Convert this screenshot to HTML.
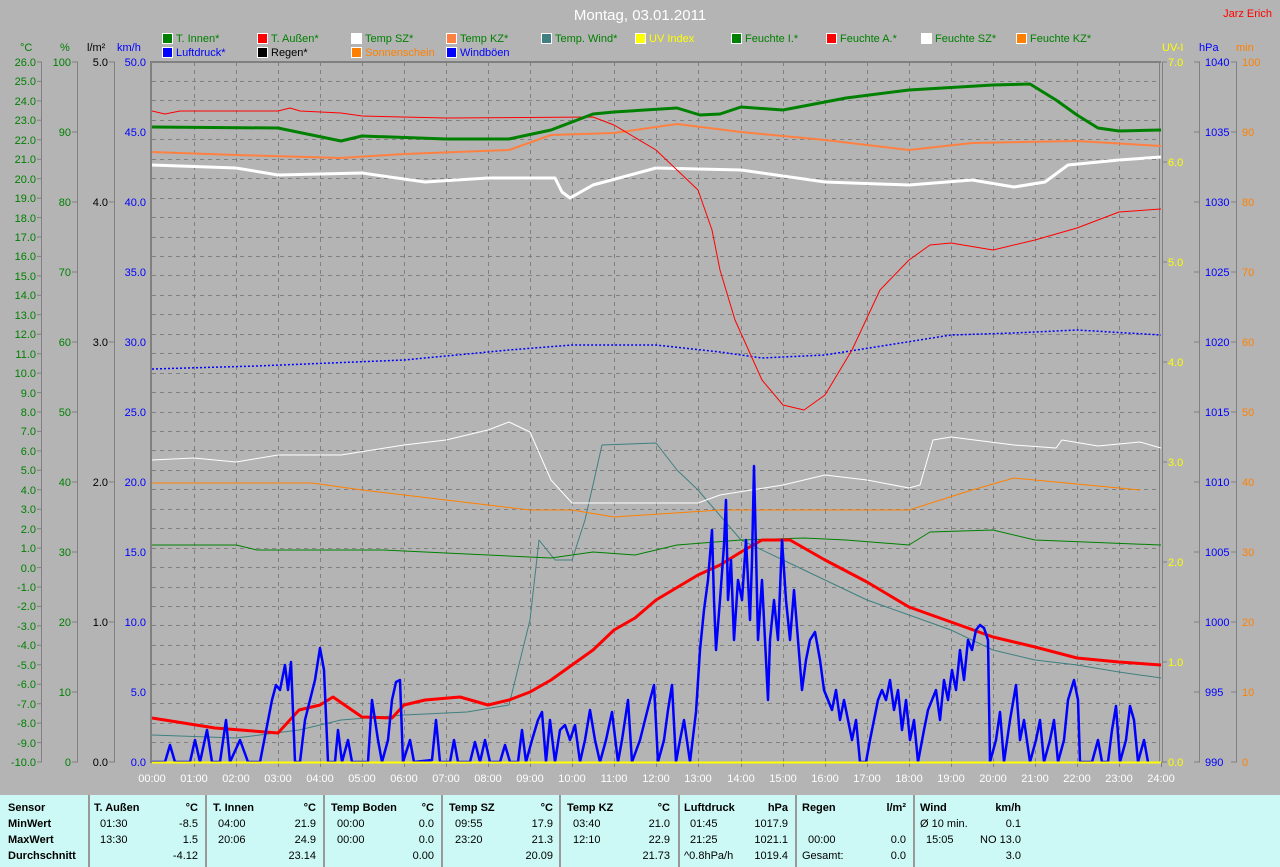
<!DOCTYPE html>
<html><head><meta charset="utf-8"><style>
body{margin:0;width:1280px;height:867px;background:#b4b4b4;overflow:hidden;font-family:"Liberation Sans",sans-serif;position:relative}
svg{position:absolute;left:0;top:0}
#tb{position:absolute;left:0;top:795px;width:1280px;height:72px;background:#ccf9f5;font-size:11px;color:#000}
#tb div{position:absolute;white-space:nowrap}
.b{font-weight:bold}
.sep{width:2px;height:72px;top:0;background:#999}
</style></head><body>
<svg width="1280" height="795" font-family="Liberation Sans, sans-serif" font-size="11">
<text x="640" y="20" fill="#fff" font-size="15" text-anchor="middle">Montag, 03.01.2011</text>
<text x="1272" y="17" fill="#f00" font-size="11" text-anchor="end">Jarz Erich</text>
<g stroke="#fff" stroke-width="1">
<rect x="162.5" y="33.5" width="10" height="10" fill="#008000"/><rect x="257.5" y="33.5" width="10" height="10" fill="#f00"/><rect x="351.5" y="33.5" width="10" height="10" fill="#fff"/><rect x="446.5" y="33.5" width="10" height="10" fill="#ff8040"/><rect x="541.5" y="33.5" width="10" height="10" fill="#408080"/><rect x="635.5" y="33.5" width="10" height="10" fill="#ff0"/><rect x="731.5" y="33.5" width="10" height="10" fill="#008000"/><rect x="826.5" y="33.5" width="10" height="10" fill="#f00"/><rect x="921.5" y="33.5" width="10" height="10" fill="#fff"/><rect x="1016.5" y="33.5" width="10" height="10" fill="#ff8000"/>
<rect x="162.5" y="47.5" width="10" height="10" fill="#00f"/><rect x="257.5" y="47.5" width="10" height="10" fill="#000"/><rect x="351.5" y="47.5" width="10" height="10" fill="#ff8000"/><rect x="446.5" y="47.5" width="10" height="10" fill="#00f"/>
</g>
<g fill="#008000"><text x="176" y="42">T. Innen*</text><text x="271" y="42">T. Außen*</text><text x="365" y="42">Temp SZ*</text><text x="460" y="42">Temp KZ*</text><text x="555" y="42">Temp. Wind*</text><text x="745" y="42">Feuchte I.*</text><text x="840" y="42">Feuchte A.*</text><text x="935" y="42">Feuchte SZ*</text><text x="1030" y="42">Feuchte KZ*</text></g>
<text x="649" y="42" fill="#ff0">UV Index</text>
<text x="176" y="56" fill="#00f">Luftdruck*</text><text x="271" y="56" fill="#000">Regen*</text><text x="365" y="56" fill="#ff8000">Sonnenschein</text><text x="460" y="56" fill="#00f">Windböen</text>
<text x="20" y="51" fill="#008000">°C</text><text x="60" y="51" fill="#008000">%</text><text x="87" y="51" fill="#000">l/m²</text><text x="117" y="51" fill="#00f">km/h</text>
<text x="1162" y="51" fill="#ff0">UV-I</text><text x="1199" y="51" fill="#00f">hPa</text><text x="1236" y="51" fill="#ff8000">min</text>
<!-- grid -->
<g stroke="#808080" stroke-dasharray="4,4" stroke-width="1">
<path d="M152 81.5H1159M152 100.5H1159M152 120.5H1159M152 139.5H1159M152 159.5H1159M152 178.5H1159M152 198.5H1159M152 217.5H1159M152 237.5H1159M152 256.5H1159M152 275.5H1159M152 295.5H1159M152 314.5H1159M152 334.5H1159M152 353.5H1159M152 373.5H1159M152 392.5H1159M152 412.5H1159M152 431.5H1159M152 450.5H1159M152 470.5H1159M152 489.5H1159M152 509.5H1159M152 528.5H1159M152 548.5H1159M152 567.5H1159M152 587.5H1159M152 606.5H1159M152 625.5H1159M152 645.5H1159M152 664.5H1159M152 684.5H1159M152 703.5H1159M152 723.5H1159M152 742.5H1159"/>
<path d="M194.5 62V762M236.5 62V762M278.5 62V762M320.5 62V762M362.5 62V762M404.5 62V762M446.5 62V762M488.5 62V762M530.5 62V762M572.5 62V762M614.5 62V762M656.5 62V762M698.5 62V762M741.5 62V762M783.5 62V762M825.5 62V762M867.5 62V762M909.5 62V762M951.5 62V762M993.5 62V762M1035.5 62V762M1077.5 62V762M1119.5 62V762"/>
</g>
<g stroke="#808080" stroke-width="1">
<path d="M194.5 762v5M236.5 762v5M278.5 762v5M320.5 762v5M362.5 762v5M404.5 762v5M446.5 762v5M488.5 762v5M530.5 762v5M572.5 762v5M614.5 762v5M656.5 762v5M698.5 762v5M741.5 762v5M783.5 762v5M825.5 762v5M867.5 762v5M909.5 762v5M951.5 762v5M993.5 762v5M1035.5 762v5M1077.5 762v5M1119.5 762v5M1161.5 762v5"/>
<path d="M41.5 62V762M77.5 62V762M114.5 62V762M1199.5 62V762M1236.5 62V762"/>
<path d="M37 62h5M37 81.4h5M37 100.9h5M37 120.3h5M37 139.8h5M37 159.2h5M37 178.7h5M37 198.1h5M37 217.6h5M37 237h5M37 256.4h5M37 275.9h5M37 295.3h5M37 314.8h5M37 334.2h5M37 353.7h5M37 373.1h5M37 392.6h5M37 412h5M37 431.4h5M37 450.9h5M37 470.3h5M37 489.8h5M37 509.2h5M37 528.7h5M37 548.1h5M37 567.6h5M37 587h5M37 606.4h5M37 625.9h5M37 645.3h5M37 664.8h5M37 684.2h5M37 703.7h5M37 723.1h5M37 742.6h5M37 762h5"/>
<path d="M72 62h6M72 132h6M72 202h6M72 272h6M72 342h6M72 412h6M72 482h6M72 552h6M72 622h6M72 692h6M72 762h6"/>
<path d="M109 62h6M109 202h6M109 342h6M109 482h6M109 622h6M109 762h6"/>
<path d="M1162 62h5M1162 162h5M1162 262h5M1162 362h5M1162 462h5M1162 562h5M1162 662h5M1162 762h5"/>
<path d="M1194 62h6M1194 132h6M1194 202h6M1194 272h6M1194 342h6M1194 412h6M1194 482h6M1194 552h6M1194 622h6M1194 692h6M1194 762h6M1231 62h6M1231 132h6M1231 202h6M1231 272h6M1231 342h6M1231 412h6M1231 482h6M1231 552h6M1231 622h6M1231 692h6M1231 762h6"/>
</g>
<path d="M151 62H1161M151 61V763" stroke="#808080" stroke-width="2" fill="none"/>
<path d="M1159.5 62V762M1162.5 62V762" stroke="#808080" stroke-width="1"/>
<g fill="#008000" text-anchor="end">
<text x="36" y="66">26.0</text><text x="36" y="85">25.0</text><text x="36" y="105">24.0</text><text x="36" y="124">23.0</text><text x="36" y="144">22.0</text><text x="36" y="163">21.0</text><text x="36" y="183">20.0</text><text x="36" y="202">19.0</text><text x="36" y="222">18.0</text><text x="36" y="241">17.0</text><text x="36" y="260">16.0</text><text x="36" y="280">15.0</text><text x="36" y="299">14.0</text><text x="36" y="319">13.0</text><text x="36" y="338">12.0</text><text x="36" y="358">11.0</text><text x="36" y="377">10.0</text><text x="36" y="397">9.0</text><text x="36" y="416">8.0</text><text x="36" y="435">7.0</text><text x="36" y="455">6.0</text><text x="36" y="474">5.0</text><text x="36" y="494">4.0</text><text x="36" y="513">3.0</text><text x="36" y="533">2.0</text><text x="36" y="552">1.0</text><text x="36" y="572">0.0</text><text x="36" y="591">-1.0</text><text x="36" y="610">-2.0</text><text x="36" y="630">-3.0</text><text x="36" y="649">-4.0</text><text x="36" y="669">-5.0</text><text x="36" y="688">-6.0</text><text x="36" y="708">-7.0</text><text x="36" y="727">-8.0</text><text x="36" y="747">-9.0</text><text x="36" y="766">-10.0</text>
<text x="71" y="66">100</text><text x="71" y="136">90</text><text x="71" y="206">80</text><text x="71" y="276">70</text><text x="71" y="346">60</text><text x="71" y="416">50</text><text x="71" y="486">40</text><text x="71" y="556">30</text><text x="71" y="626">20</text><text x="71" y="696">10</text><text x="71" y="766">0</text>
</g>
<g fill="#000" text-anchor="end"><text x="108" y="66">5.0</text><text x="108" y="206">4.0</text><text x="108" y="346">3.0</text><text x="108" y="486">2.0</text><text x="108" y="626">1.0</text><text x="108" y="766">0.0</text></g>
<g fill="#00f" text-anchor="end"><text x="146" y="66">50.0</text><text x="146" y="136">45.0</text><text x="146" y="206">40.0</text><text x="146" y="276">35.0</text><text x="146" y="346">30.0</text><text x="146" y="416">25.0</text><text x="146" y="486">20.0</text><text x="146" y="556">15.0</text><text x="146" y="626">10.0</text><text x="146" y="696">5.0</text><text x="146" y="766">0.0</text></g>
<g fill="#ff0"><text x="1168" y="66">7.0</text><text x="1168" y="166">6.0</text><text x="1168" y="266">5.0</text><text x="1168" y="366">4.0</text><text x="1168" y="466">3.0</text><text x="1168" y="566">2.0</text><text x="1168" y="666">1.0</text><text x="1168" y="766">0.0</text></g>
<g fill="#00f"><text x="1205" y="66">1040</text><text x="1205" y="136">1035</text><text x="1205" y="206">1030</text><text x="1205" y="276">1025</text><text x="1205" y="346">1020</text><text x="1205" y="416">1015</text><text x="1205" y="486">1010</text><text x="1205" y="556">1005</text><text x="1205" y="626">1000</text><text x="1205" y="696">995</text><text x="1205" y="766">990</text></g>
<g fill="#ff8000"><text x="1242" y="66">100</text><text x="1242" y="136">90</text><text x="1242" y="206">80</text><text x="1242" y="276">70</text><text x="1242" y="346">60</text><text x="1242" y="416">50</text><text x="1242" y="486">40</text><text x="1242" y="556">30</text><text x="1242" y="626">20</text><text x="1242" y="696">10</text><text x="1242" y="766">0</text></g>
<g fill="#fff" text-anchor="middle"><text x="152" y="782">00:00</text><text x="194" y="782">01:00</text><text x="236" y="782">02:00</text><text x="278" y="782">03:00</text><text x="320" y="782">04:00</text><text x="362" y="782">05:00</text><text x="404" y="782">06:00</text><text x="446" y="782">07:00</text><text x="488" y="782">08:00</text><text x="530" y="782">09:00</text><text x="572" y="782">10:00</text><text x="614" y="782">11:00</text><text x="656" y="782">12:00</text><text x="698" y="782">13:00</text><text x="741" y="782">14:00</text><text x="783" y="782">15:00</text><text x="825" y="782">16:00</text><text x="867" y="782">17:00</text><text x="909" y="782">18:00</text><text x="951" y="782">19:00</text><text x="993" y="782">20:00</text><text x="1035" y="782">21:00</text><text x="1077" y="782">22:00</text><text x="1119" y="782">23:00</text><text x="1161" y="782">24:00</text></g>
<g fill="none" stroke-linejoin="round">
<polyline stroke="#408080" stroke-width="1" points="152,735 236,738 299,730 341,720 404,715 467,712 509,705 530,620 539,540 555,560 572,560 585,520 602,445 656,443 677,470 698,490 741,540 783,560 825,580 867,600 909,615 951,630 993,650 1035,660 1077,665 1119,672 1161,678"/>
<polyline stroke="#008000" stroke-width="1" points="152,545 236,545 257,550 383,550 488,555 551,558 593,552 635,555 677,545 741,540 804,538 846,540 909,545 930,532 993,530 1035,540 1161,545"/>
<polyline stroke="#ff8000" stroke-width="1" points="152,483 312,483 362,490 446,500 530,510 572,510 614,517 720,510 909,510 972,490 1014,478 1077,484 1140,490"/>
<polyline stroke="#fff" stroke-width="1" points="152,460 194,458 236,462 278,455 341,455 404,445 446,440 488,430 509,422 530,432 551,480 572,503 698,503 720,495 783,485 825,475 867,480 909,488 920,485 933,440 951,437 1014,445 1056,448 1062,440 1098,446 1140,442 1161,448"/>
<polyline stroke="#00f" stroke-width="1.5" stroke-dasharray="2,2" points="152,369 257,366 404,360 509,350 572,345 656,345 720,352 762,358 825,355 888,345 951,335 1014,333 1077,330 1161,335"/>
<polyline stroke="#fff" stroke-width="3" points="152,165 236,168 278,175 362,173 425,182 488,178 555,178 562,192 570,198 593,185 656,168 741,170 825,182 909,185 972,180 1014,187 1045,182 1068,165 1119,160 1161,157"/>
<polyline stroke="#ff8040" stroke-width="2" points="152,152 236,155 341,158 404,154 509,150 551,135 614,133 677,124 741,132 825,140 909,150 972,143 1077,141 1161,146"/>
<polyline stroke="#f00" stroke-width="1" points="152,111 165,114 180,111 278,111 290,108 300,111 341,113 362,116 446,118 593,117 614,125 656,150 698,190 712,230 720,270 735,320 762,380 783,405 804,410 825,395 852,350 880,290 909,260 930,245 951,243 993,250 1035,240 1077,228 1119,212 1161,209"/>
<polyline stroke="#008000" stroke-width="3" points="152,127 278,128 341,141 362,136 446,139 509,139 551,130 593,114 614,112 677,108 700,115 720,114 741,107 783,110 846,98 909,90 993,85 1030,84 1056,100 1077,115 1098,128 1119,131 1161,130"/>
<polyline stroke="#f00" stroke-width="3" points="152,718 215,728 278,733 299,710 320,705 333,697 362,717 392,718 404,705 425,700 460,697 488,705 509,700 530,692 551,680 593,650 614,630 635,618 656,600 698,575 720,565 741,552 762,540 790,540 825,560 867,582 909,607 951,622 993,637 1035,647 1077,658 1119,662 1161,665"/>
<polyline stroke="#00f" stroke-width="2.5" points="152,762 165,762 170,745 175,762 190,762 195,740 200,762 207,730 212,762 220,762 226,720 230,762 240,740 248,762 260,762 272,700 276,685 280,690 285,665 288,690 291,662 295,762 300,762 305,720 310,700 315,680 320,648 324,670 328,762 335,762 338,730 342,762 348,740 352,762 368,762 372,700 378,740 382,762 388,740 392,700 396,682 400,680 403,762 410,740 414,762 432,760 436,720 440,762 450,762 454,740 458,762 470,762 475,742 480,762 485,740 490,762 500,762 505,745 510,762 518,762 522,730 526,762 532,740 538,720 542,712 546,762 550,720 555,762 560,730 565,725 570,740 575,725 580,762 585,740 590,710 595,740 600,762 606,740 612,712 618,762 622,740 628,700 632,762 640,740 645,720 650,700 654,685 658,762 664,740 668,710 672,685 676,762 680,740 684,720 690,762 696,712 700,650 704,610 708,580 712,530 714,600 716,650 720,600 724,545 726,500 728,600 731,560 734,640 738,580 742,600 746,540 750,620 752,560 754,466 756,550 758,640 762,580 765,640 768,700 770,640 774,600 778,640 782,540 786,600 790,640 794,590 798,640 802,690 806,660 810,640 815,632 820,660 824,690 828,700 832,710 836,690 840,720 844,700 848,720 852,740 856,720 860,762 866,762 870,740 874,720 878,700 882,690 886,700 890,680 894,710 898,690 902,730 906,700 910,740 914,720 918,762 924,730 928,710 932,700 936,690 940,720 944,680 948,700 952,670 956,690 960,650 964,680 968,640 972,650 976,630 980,625 984,628 988,640 990,762 996,740 1000,712 1004,762 1010,720 1016,685 1020,740 1024,720 1030,762 1036,740 1040,720 1044,762 1050,740 1054,720 1058,762 1064,740 1068,700 1074,680 1078,700 1080,762 1092,762 1098,740 1102,762 1108,762 1112,730 1116,706 1120,762 1126,740 1130,706 1134,720 1138,762 1144,740 1148,762"/>
</g>
<path d="M152 762.5H1161" stroke="#ff0" stroke-width="2"/>
</svg>
<div id="tb">
<div class="sep" style="left:88px"></div><div class="sep" style="left:205px"></div><div class="sep" style="left:323px"></div><div class="sep" style="left:441px"></div><div class="sep" style="left:559px"></div><div class="sep" style="left:678px"></div><div class="sep" style="left:795px"></div><div class="sep" style="left:913px"></div>
<div class="b" style="left:8px;top:7px">Sensor</div><div class="b" style="left:8px;top:23px">MinWert</div><div class="b" style="left:8px;top:39px">MaxWert</div><div class="b" style="left:8px;top:55px">Durchschnitt</div>

<div class="b" style="left:94px;top:7px">T. Außen</div><div class="b" style="right:1082px;top:7px">°C</div>
<div style="left:100px;top:23px">01:30</div><div style="right:1082px;top:23px">-8.5</div><div style="left:100px;top:39px">13:30</div><div style="right:1082px;top:39px">1.5</div><div style="right:1082px;top:55px">-4.12</div>

<div class="b" style="left:213px;top:7px">T. Innen</div><div class="b" style="right:964px;top:7px">°C</div>
<div style="left:218px;top:23px">04:00</div><div style="right:964px;top:23px">21.9</div><div style="left:218px;top:39px">20:06</div><div style="right:964px;top:39px">24.9</div><div style="right:964px;top:55px">23.14</div>

<div class="b" style="left:331px;top:7px">Temp Boden</div><div class="b" style="right:846px;top:7px">°C</div>
<div style="left:337px;top:23px">00:00</div><div style="right:846px;top:23px">0.0</div><div style="left:337px;top:39px">00:00</div><div style="right:846px;top:39px">0.0</div><div style="right:846px;top:55px">0.00</div>

<div class="b" style="left:449px;top:7px">Temp SZ</div><div class="b" style="right:727px;top:7px">°C</div>
<div style="left:455px;top:23px">09:55</div><div style="right:727px;top:23px">17.9</div><div style="left:455px;top:39px">23:20</div><div style="right:727px;top:39px">21.3</div><div style="right:727px;top:55px">20.09</div>

<div class="b" style="left:567px;top:7px">Temp KZ</div><div class="b" style="right:610px;top:7px">°C</div>
<div style="left:573px;top:23px">03:40</div><div style="right:610px;top:23px">21.0</div><div style="left:573px;top:39px">12:10</div><div style="right:610px;top:39px">22.9</div><div style="right:610px;top:55px">21.73</div>

<div class="b" style="left:684px;top:7px">Luftdruck</div><div class="b" style="right:492px;top:7px">hPa</div>
<div style="left:690px;top:23px">01:45</div><div style="right:492px;top:23px">1017.9</div><div style="left:690px;top:39px">21:25</div><div style="right:492px;top:39px">1021.1</div><div style="left:684px;top:55px">^0.8hPa/h</div><div style="right:492px;top:55px">1019.4</div>

<div class="b" style="left:802px;top:7px">Regen</div><div class="b" style="right:374px;top:7px">l/m²</div>
<div style="left:808px;top:39px">00:00</div><div style="right:374px;top:39px">0.0</div><div style="left:802px;top:55px">Gesamt:</div><div style="right:374px;top:55px">0.0</div>

<div class="b" style="left:920px;top:7px">Wind</div><div class="b" style="right:259px;top:7px">km/h</div>
<div style="left:920px;top:23px">Ø 10 min.</div><div style="right:259px;top:23px">0.1</div><div style="left:926px;top:39px">15:05</div><div style="right:259px;top:39px">NO 13.0</div><div style="right:259px;top:55px">3.0</div>
</div>
</body></html>
